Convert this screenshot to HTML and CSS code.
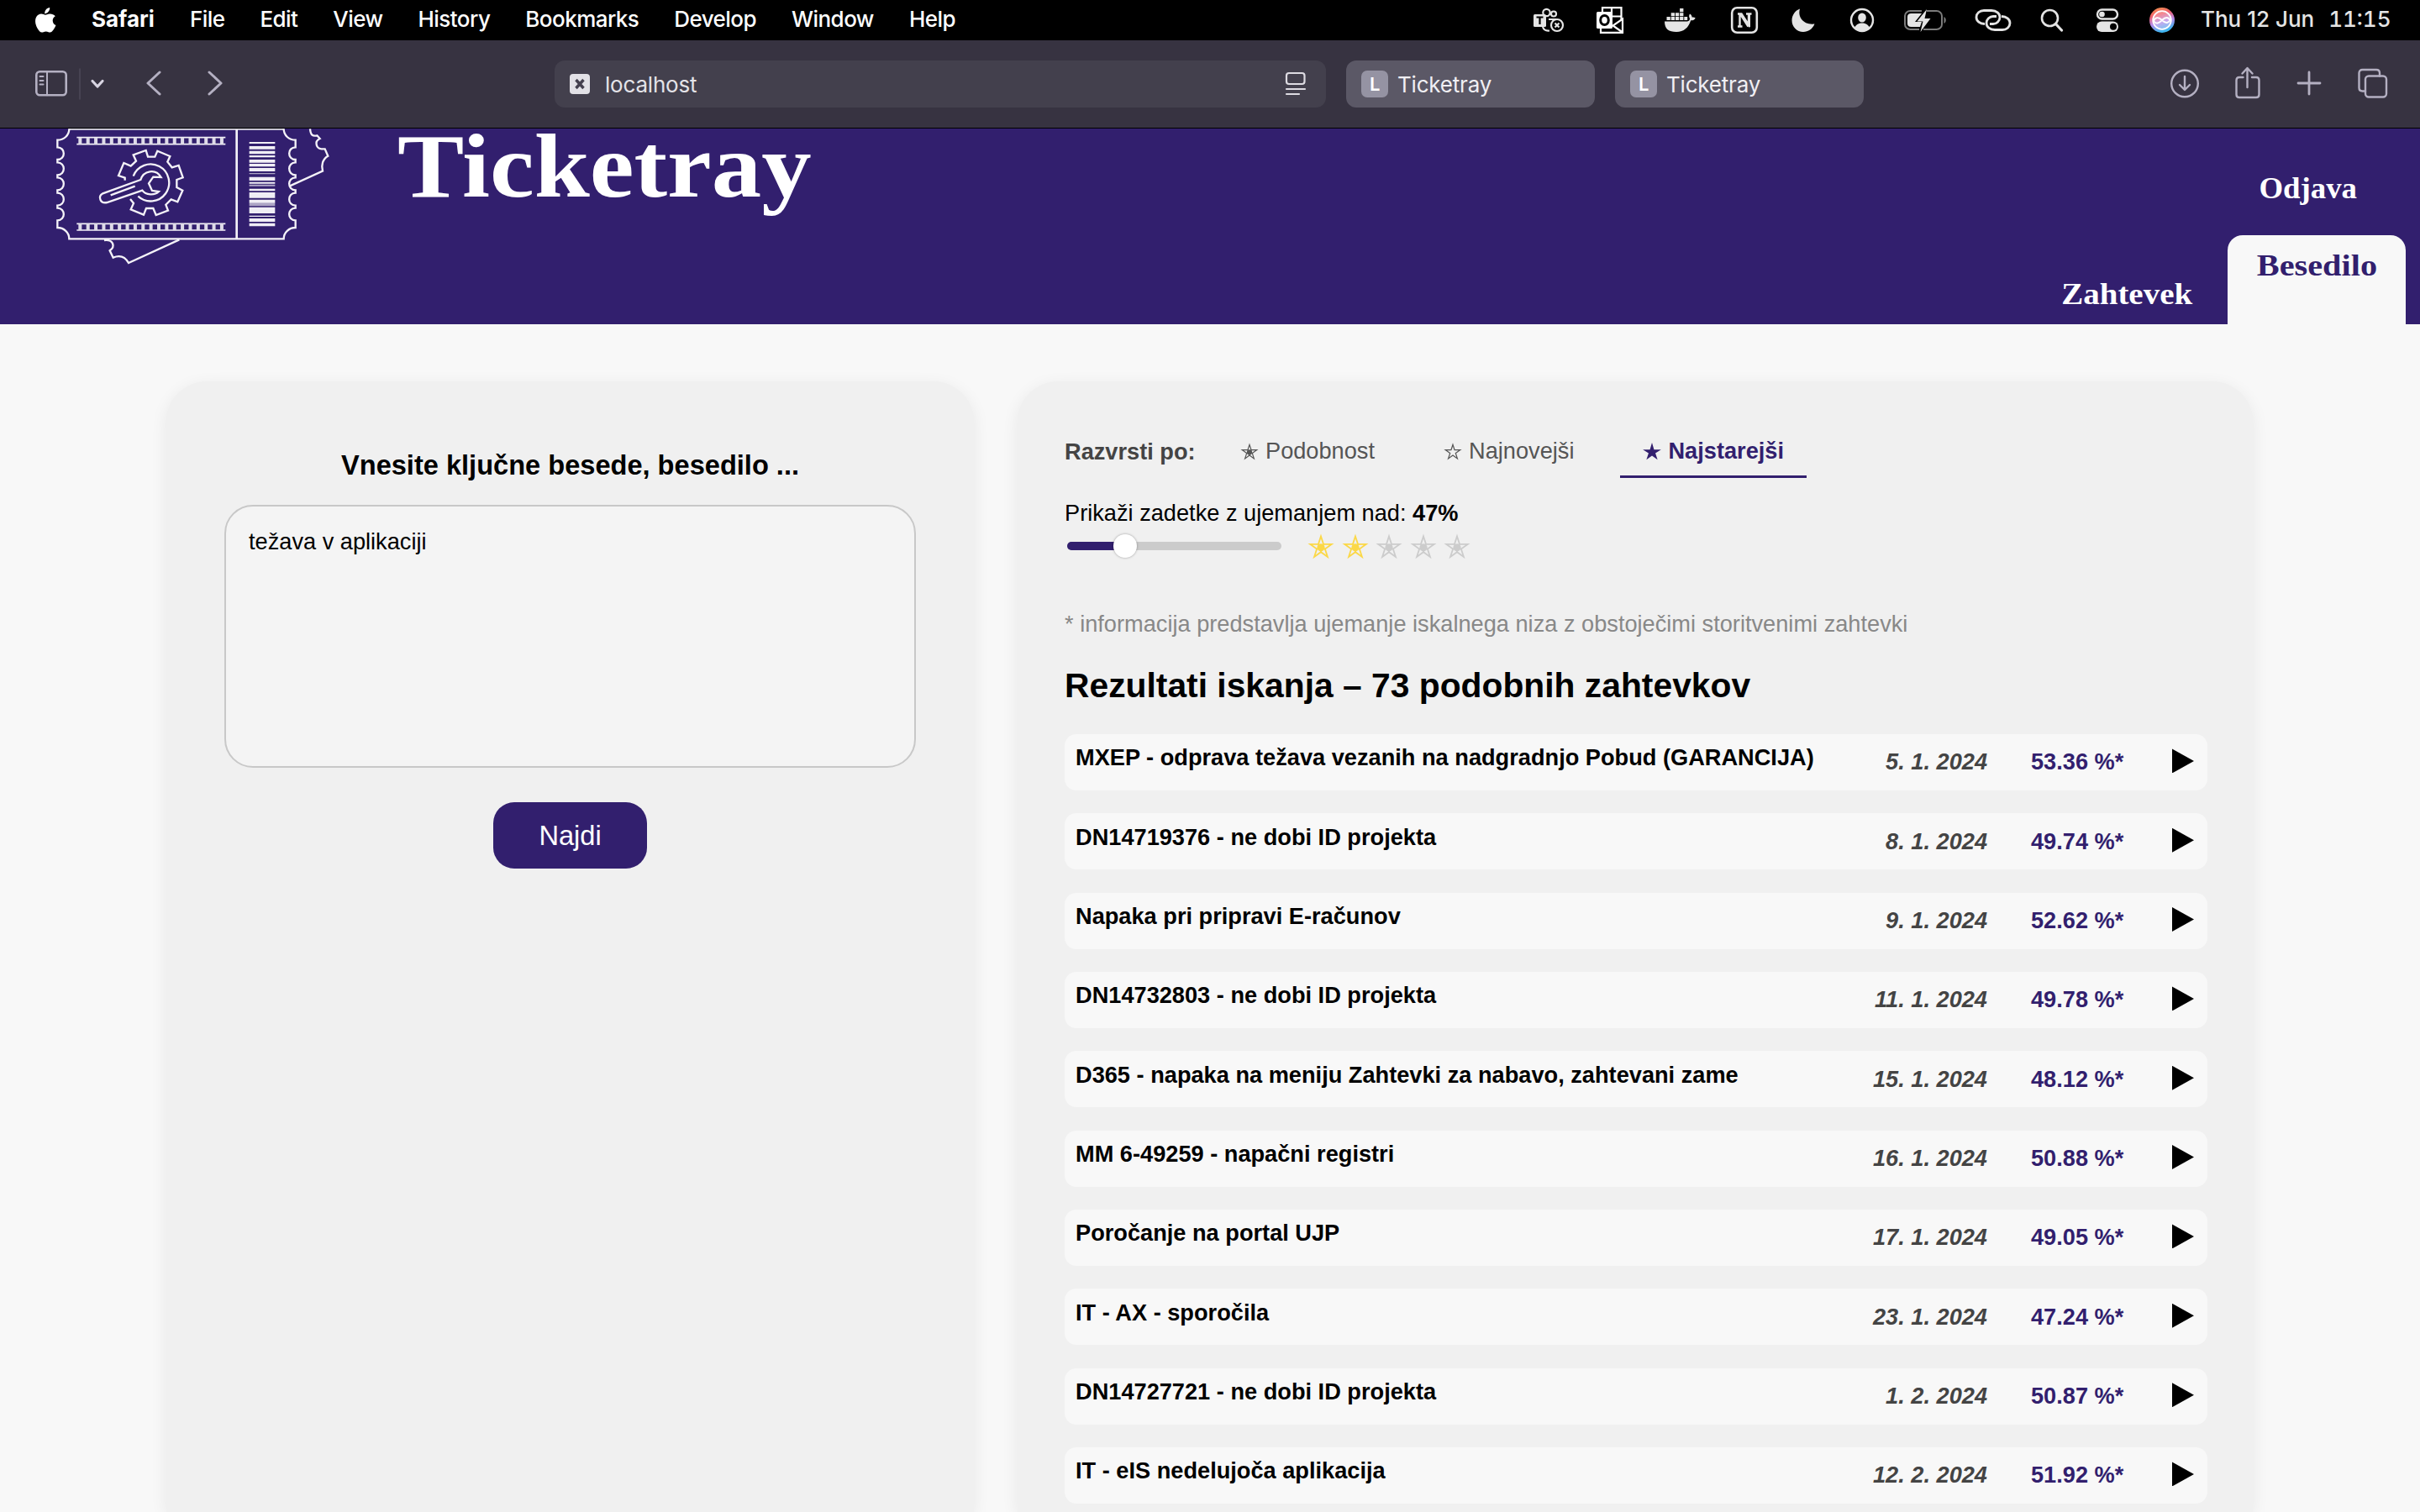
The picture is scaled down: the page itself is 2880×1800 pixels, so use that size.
FILE: index.html
```html
<!DOCTYPE html>
<html lang="sl">
<head>
<meta charset="utf-8">
<title>Ticketray</title>
<link rel="stylesheet" href="styles.css">
</head>
<body>
<svg width="0" height="0" class="defs" aria-hidden="true">
  <defs>
    <symbol id="star-dot" viewBox="0 0 32 31">
      <path d="M16 3.500 19.050 12.800H28.800L20.900 18.600 23.900 27.900 16 22.200 8.100 27.900 11.100 18.600 3.200 12.800H12.950Z" fill="none" stroke="currentColor" stroke-width="1.800"/>
      <circle cx="16" cy="16.800" r="4.600" fill="currentColor"/>
      <path d="M16 16.800 12.950 12.800M16 16.800 19.050 12.800M16 16.800 20.900 18.600M16 16.800V22.200M16 16.800 11.100 18.600" stroke="currentColor" stroke-width="1.800"/>
    </symbol>
  </defs>
</svg>

<div class="menubar">
  <svg class="apple" width="28" height="32" viewBox="0 0 28 32"><path fill="#fff" d="M19.200 1c.2 2-.6 3.800-1.700 5.100-1.200 1.400-2.800 2.200-4.300 2.100-.2-1.900.7-3.800 1.700-5C16 1.900 17.800 1.100 19.200 1zM25.800 11.200c-2 1.200-3.100 3-3.100 5.200 0 2.600 1.500 4.600 3.800 5.600-.6 1.800-1.500 3.500-2.600 5.100-1.300 1.900-2.600 3.400-4.500 3.400-1.900 0-2.500-1.100-4.700-1.100-2.300 0-3 1.100-4.800 1.100-1.900.1-3.300-1.700-4.600-3.600C2.600 23.100.7 16.500 3.300 12.100 4.600 9.900 6.800 8.500 9.200 8.500c1.900 0 3.600 1.200 4.800 1.200 1.100 0 3.200-1.500 5.600-1.300 2.300.1 4.700 1 6.200 2.800z"/></svg>
  <div class="menus">
    <b>Safari</b><span>File</span><span>Edit</span><span>View</span><span>History</span><span>Bookmarks</span><span>Develop</span><span>Window</span><span>Help</span>
  </div>
  <div class="status">
    <svg class="s-teams" width="38" height="32" viewBox="0 0 38 32" fill="none" stroke="#e4e4e4" stroke-width="2.200"><circle cx="16.500" cy="7" r="4.200"/><circle cx="25" cy="8.500" r="3"/><path d="M19 15h9M12 24c1 3 4 5 8 4.500"/><rect x="1" y="9" width="15" height="15" rx="1.500" fill="#e4e4e4" stroke="none"/><path d="M4.500 12.500h8M8.500 12.500V21" stroke="#000"/><circle cx="29" cy="22" r="7" fill="#000"/><path d="m26.500 19.500 5 5m0-5-5 5"/></svg>
    <svg class="s-outlook" width="34" height="34" viewBox="0 0 34 34" fill="none" stroke="#fff" stroke-width="2.200"><path d="M8 7V2.200h22.500V17M19 2v11M19 12.500h11"/><path d="M6 26v5.800h26V15.500L20.500 23.500 32 31.500"/><rect x="1" y="7" width="19" height="20" rx="1.500" fill="#fff" stroke="none"/><ellipse cx="10.500" cy="17" rx="4.800" ry="5.500" stroke="#000" stroke-width="3"/></svg>
    <svg class="s-docker" width="38" height="32" viewBox="0 0 38 32" fill="#e4e4e4"><path d="M1 17.500h27c2-.3 3-1.500 3-3.500-1.300-2-1-4 0-5.500 1.800 1 2.500 2.500 2.700 4 1.500-.3 3 0 4 .9-1 2.300-3 3-5.500 2.900C29.500 25 24 30 15 30 6 30 1 26.500 1 17.500zM3.500 12h4.300v4H3.500zM8.700 12H13v4H8.700zM13.900 12h4.300v4h-4.300zM19.100 12h4.300v4h-4.300zM24.300 12h3.900v4h-3.900zM8.700 7.200H13v4H8.700zM13.900 7.200h4.300v4h-4.300zM19.100 7.200h4.300v4h-4.300zM19.100 2h4.300v4.300h-4.300z"/></svg>
    <svg class="s-notion" width="34" height="34" viewBox="0 0 34 34"><rect x="2.200" y="2.200" width="29.600" height="29.600" rx="6" fill="none" stroke="#e4e4e4" stroke-width="2.600"/><path d="M9 9.500h4.500l8.500 13V10.500M9 24.500h5.500M11.500 10v14M19 9.500h6.500M22.800 25V10M12 9.500l9.500 15" fill="none" stroke="#e4e4e4" stroke-width="2.400"/></svg>
    <svg class="s-moon" width="30" height="30" viewBox="0 0 30 30"><path fill="#e4e4e4" d="M11 1.500c-3 10 4.500 19.500 17.500 18C26 25.500 21 29 15 29 7.500 29 1.500 23 1.500 15.500 1.500 9 5.500 3.500 11 1.500z"/></svg>
    <svg class="s-user" width="30" height="30" viewBox="0 0 30 30"><circle cx="15" cy="15" r="13" fill="none" stroke="#e4e4e4" stroke-width="2.400"/><ellipse cx="15" cy="12" rx="4.800" ry="5.600" fill="#e4e4e4"/><path d="M6 24c2-4 5-5.500 9-5.500s7 1.500 9 5.500c-5 5-13 5-18 0z" fill="#e4e4e4"/></svg>
    <svg class="s-battery" width="52" height="30" viewBox="0 0 52 30"><path d="M22 4H8.500C5 4 2 6.500 2 10v10c0 3.500 3 6 6.500 6H19M28 4h11.500C43 4 46 6.500 46 10v10c0 3.500-3 6-6.500 6H24" fill="none" stroke="#7b7b7b" stroke-width="2"/><path d="M48.500 11v8c3-1.500 3-6.500 0-8z" fill="#7b7b7b"/><path d="M22 7H9.500C6.500 7 5 8.500 5 11v8c0 2.500 1.500 4 4.500 4H20l2-6h-8z" fill="#e4e4e4"/><path d="M28 2 16.500 16.500h7L20.500 29 32.500 13h-7z" fill="#e4e4e4"/></svg>
    <svg class="s-link" width="44" height="28" viewBox="0 0 44 28" fill="none" stroke="#e4e4e4" stroke-width="2.800"><path d="M12 18.500C6 18.500 2 15 2 10.500S6 2.500 11 2.500h9c6 0 10 3.500 10 8s-4 8-8 8h-4"/><path d="M32 9.500c6 0 10 3.500 10 8s-4 8-9 8h-9c-6 0-10-3.500-10-8s4-8 8-8h4"/></svg>
    <svg class="s-search" width="28" height="28" viewBox="0 0 28 28" fill="none" stroke="#e4e4e4" stroke-width="2.600" stroke-linecap="round"><circle cx="11.500" cy="11.500" r="9.500"/><path d="m18.500 18.500 7 7.500" stroke-width="3.200"/></svg>
    <svg class="s-toggle" width="28" height="30" viewBox="0 0 28 30"><rect x="2" y="2.500" width="24" height="11" rx="5.500" fill="none" stroke="#e4e4e4" stroke-width="2.400"/><circle cx="7.500" cy="8" r="3.300" fill="#e4e4e4"/><rect x="1" y="16.500" width="26" height="12.500" rx="6.200" fill="#e4e4e4"/><circle cx="21" cy="22.700" r="4" fill="#000"/></svg>
    <svg class="s-siri" width="30" height="30" viewBox="0 0 30 30"><defs><linearGradient id="siri" x1="0" y1="0" x2=".3" y2="1"><stop offset="0" stop-color="#f5a04a"/><stop offset=".35" stop-color="#f0606a"/><stop offset=".65" stop-color="#b98ae8"/><stop offset="1" stop-color="#3fb5f0"/></linearGradient></defs><circle cx="15" cy="15" r="15" fill="url(#siri)"/><g fill="none" stroke="#fff" stroke-width="1.800"><circle cx="15" cy="15" r="10.800" fill="#fff" fill-opacity=".25"/><path d="M5 16c2-5 6-5 10-1s7 4 9.500 0c-2-4-5.500-4-9.500 0s-7 5-10 1z"/></g></svg>
    <div class="clock"><span>Thu 12 Jun</span><span class="time">11:15</span></div>
  </div>
</div>

<div class="toolbar">
  <svg class="t-left" width="230" height="40" viewBox="0 0 230 40" fill="none" stroke="#b4b0c2" stroke-width="2.600" stroke-linecap="round" stroke-linejoin="round">
    <rect x="3.300" y="5.300" width="35.400" height="28" rx="4"/><path d="M16 5.300v28M7.500 11h4M7.500 16h4M7.500 20.500h4" stroke-width="2"/>
    <path d="M55 2v36" stroke="#4e4a58" stroke-width="1.500"/>
    <path d="m70 16.500 6 6.500 6-6.500" stroke="#d8d5e2" stroke-width="3.200"/>
    <path d="m150 6-14 13 14 13M209 6l14 13-14 13" stroke-width="3"/>
  </svg>
  <div class="urlbar">
    <svg width="24" height="24" viewBox="0 0 24 24"><rect width="24" height="24" rx="4" fill="#e2e1e6"/><path d="m7.500 7 9 10m0-10-9 10" stroke="#44404e" stroke-width="3.400"/></svg>
    <span>localhost</span>
    <svg class="reader" width="26" height="30" viewBox="0 0 26 30" fill="none" stroke="#dddbe2" stroke-width="2.200" stroke-linecap="round"><rect x="2" y="2" width="21.500" height="13" rx="3"/><path d="M2 21h22M2 27h15"/></svg>
  </div>
  <div class="tab"><b>L</b><span>Ticketray</span></div>
  <div class="tab"><b>L</b><span>Ticketray</span></div>
  <svg class="t-right" width="275" height="44" viewBox="0 0 275 44" fill="none" stroke="#b4b0c2" stroke-width="2.400" stroke-linecap="round" stroke-linejoin="round">
    <circle cx="20" cy="21.500" r="15.800"/><path d="M20 13v15.500m-6-5.500 6 6 6-6"/>
    <path d="M89.500 14H85c-2 0-3.500 1.500-3.500 3.500v17c0 2 1.500 3.500 3.500 3.500h20c2 0 3.500-1.500 3.500-3.500v-17c0-2-1.500-3.500-3.500-3.500h-5M94.500 26V3.500m-6 6 6-6.500 6 6.500"/>
    <path d="M155 21h26M168 8v26" stroke-width="2.800"/>
    <rect x="235" y="12.500" width="25" height="25" rx="4"/><path d="M235 30.500h-3.500c-2.500 0-4-1.500-4-4V9c0-2.500 1.500-4 4-4h16.500c2.500 0 4 1.500 4 4v3.500"/>
  </svg>
</div>

<header class="site-header">
  <svg class="logo" width="380" height="187" viewBox="0 39 1140 561" fill="none" stroke="#f4f2f8" stroke-width="7" stroke-linejoin="miter">
    <path d="M127 42H893" stroke="#c6c3d2" stroke-width="6"/>
    <path d="M127 40C127 64 108 80 85 80V106C115 106 115 150 85 150V160C115 160 115 205 85 205V214C115 214 115 259 85 259V269C115 269 115 314 85 314V323C115 323 115 367 85 367V393C108 393 127 410 127 433H893C893 410 912 393 935 393V367C905 367 905 323 935 323V314C905 314 905 269 935 269V259C905 259 905 214 935 214V205C905 205 905 160 935 160V150C905 150 905 106 935 106V80C912 80 893 64 893 40"/>
    <path d="M725 42V433" stroke-width="8"/>
    <g stroke-width="5"><path d="M154 71H685M154 95H685M154 379H685M154 402H685"/></g>
    <path d="M160 83H684M160 390.500H684" stroke="#dedbe8" stroke-width="24" stroke-dasharray="12 16.100"/>
    <path d="M326 224V215L303 207 322 162 347 173 366 155 356 133 401 117 408 140H433L442 119 487 138 478 158 494 178 518 171 533 214 511 222V249L532 260 514 301 491 292 472 311 480 332 437 348 427 324H402L393 347 347 328 357 306 345 291M356 209A66 66 0 1 1 373 281"/>
    <path d="M382 222 247 271C228 282 238 308 262 303L388 260C400 277 432 279 447 264L423 261 411 235 427 212 455 213C435 180 392 190 382 222ZM275 277 362 245"/>
    <path d="M987 40C989 62 996 68 1012 64L1022 75C1000 85 1010 114 1030 112H1040L1051 137C1032 148 1026 170 1032 191L915 244"/>
    <path d="M252 438C286 434 292 462 272 475L284 500C308 490 326 496 339 519L520 436"/>
    <g fill="#f0eef5" stroke="none"><path d="M770 87h92v6h-92zM770 102h92v11h-92zM770 119h92v11h-92zM770 135h92v7h-92zM770 150h92v11h-92zM770 165h92v10h-92zM770 180h92v12h-92zM770 212h92v13h-92zM770 230h92v6h-92zM770 254h92v8h-92zM770 267h92v20h-92zM770 293h92v12h-92zM770 320h92v22h-92zM770 350h92v4h-92zM770 360h92v12h-92zM770 377h92v11h-92z"/><path d="M770 198h92v4h-92zM770 239h92v6h-92zM770 305h92v11h-92z" opacity=".65"/></g>
  </svg>
  <h1>Ticketray</h1>
  <nav class="nav">
    <a class="logout">Odjava</a>
    <div class="nav-row"><a class="nav-link"><span>Zahtevek</span></a><a class="nav-tab"><span>Besedilo</span></a></div>
  </nav>
</header>

<main class="content">
  <section class="card search">
    <h2>Vnesite ključne besede, besedilo ...</h2>
    <div class="textarea">težava v aplikaciji</div>
    <button class="find">Najdi</button>
  </section>

  <section class="card results">
    <div class="sort">
      <strong class="sort-label">Razvrsti po:</strong>
      <a class="sort-tab"><svg width="22" height="21"><use href="#star-dot"/></svg><span>Podobnost</span></a>
      <a class="sort-tab"><svg width="22" height="21" viewBox="0 0 32 31"><path d="M16 3.500 19.050 12.800H28.800L20.900 18.600 23.900 27.900 16 22.200 8.100 27.900 11.100 18.600 3.200 12.800H12.950Z" fill="none" stroke="currentColor" stroke-width="1.900"/></svg><span>Najnovejši</span></a>
      <a class="sort-tab active"><svg width="22" height="21" viewBox="0 0 32 31"><path d="M16 0 19.600 12H32L22 18.500 25.800 30 16 22.900 6.200 30 10 18.500 0 12H12.400Z" fill="currentColor"/></svg><span>Najstarejši</span></a>
    </div>
    <p class="match">Prikaži zadetke z ujemanjem nad: <b>47%</b></p>
    <div class="range">
      <div class="track"><div class="fill"></div><div class="thumb"></div></div>
      <div class="stars"><svg class="on"><use href="#star-dot"/></svg><svg class="on"><use href="#star-dot"/></svg><svg><use href="#star-dot"/></svg><svg><use href="#star-dot"/></svg><svg><use href="#star-dot"/></svg></div>
    </div>
    <p class="info">* informacija predstavlja ujemanje iskalnega niza z obstoječimi storitvenimi zahtevki</p>
    <h2 class="found">Rezultati iskanja – 73 podobnih zahtevkov</h2>
    <div class="rows">
      <div class="row"><b>MXEP - odprava težava vezanih na nadgradnjo Pobud (GARANCIJA)</b><i>5. 1. 2024</i><em>53.36 %*</em><s></s></div>
      <div class="row"><b>DN14719376 - ne dobi ID projekta</b><i>8. 1. 2024</i><em>49.74 %*</em><s></s></div>
      <div class="row"><b>Napaka pri pripravi E-računov</b><i>9. 1. 2024</i><em>52.62 %*</em><s></s></div>
      <div class="row"><b>DN14732803 - ne dobi ID projekta</b><i>11. 1. 2024</i><em>49.78 %*</em><s></s></div>
      <div class="row"><b>D365 - napaka na meniju Zahtevki za nabavo, zahtevani zame</b><i>15. 1. 2024</i><em>48.12 %*</em><s></s></div>
      <div class="row"><b>MM 6-49259 - napačni registri</b><i>16. 1. 2024</i><em>50.88 %*</em><s></s></div>
      <div class="row"><b>Poročanje na portal UJP</b><i>17. 1. 2024</i><em>49.05 %*</em><s></s></div>
      <div class="row"><b>IT - AX - sporočila</b><i>23. 1. 2024</i><em>47.24 %*</em><s></s></div>
      <div class="row"><b>DN14727721 - ne dobi ID projekta</b><i>1. 2. 2024</i><em>50.87 %*</em><s></s></div>
      <div class="row"><b>IT - eIS nedelujoča aplikacija</b><i>12. 2. 2024</i><em>51.92 %*</em><s></s></div>
    </div>
  </section>
</main>
</body>
</html>
```
FILE: styles.css
```css
* { box-sizing: border-box; }

body {
  margin: 0;
  width: 2880px;
  height: 1800px;
  overflow: hidden;
  display: flex;
  flex-direction: column;
  background: #f8f8f8;
  color: #000;
  font-family: "Liberation Sans", sans-serif;
}

svg { display: block; flex: none; }
.defs { position: absolute; }
h1, h2, p { margin: 0; font-weight: bold; }

/* System menu bar */
.menubar {
  flex: none;
  height: 48px;
  background: #000;
  color: #fff;
  display: flex;
  align-items: center;
  padding: 0 37px 0 40px;
  font: 500 26px "Inter", sans-serif;
}
.menus { display: flex; gap: 42px; margin-left: 41px; padding-bottom: 3px; letter-spacing: -.55px; }
.menus b { font-weight: 700; letter-spacing: 0; }
.status { margin-left: auto; display: flex; align-items: center; color: #e4e4e4; }
.s-teams { margin-right: 37px; }
.s-outlook { margin-right: 47px; }
.s-docker { margin-right: 41px; }
.s-notion { margin-right: 38px; }
.s-moon { margin-right: 40px; }
.s-user { margin-right: 34px; }
.s-battery { margin-right: 33px; }
.s-link { margin-right: 34px; }
.s-search { margin-right: 38px; }
.s-toggle { margin-right: 36px; }
.s-siri { margin-right: 31px; }
.clock { display: flex; gap: 17px; padding-bottom: 3px; width: 224px; white-space: nowrap; }
.time { font-feature-settings: "tnum"; }

/* Browser toolbar */
.toolbar {
  flex: none;
  height: 105px;
  background: #373341;
  border-bottom: 1px solid #000;
  display: flex;
  align-items: center;
  padding: 0 25px 0 40px;
  color: #e4e3e8;
  font: 400 26px "Inter", sans-serif;
  letter-spacing: -.2px;
}
.t-left { margin-right: 390px; }
.urlbar {
  width: 918px;
  height: 56px;
  border-radius: 12px;
  background: #43404d;
  display: flex;
  align-items: center;
  padding: 0 23px 0 18px;
  gap: 18px;
}
.urlbar span, .tab span { padding-top: 1px; }
.reader { margin-left: auto; }
.tab {
  width: 296px;
  height: 56px;
  border-radius: 12px;
  background: #5b5866;
  display: flex;
  align-items: center;
  padding-left: 18px;
  gap: 11px;
  margin-left: 24px;
  color: #f0eff3;
}
.tab b {
  width: 32px;
  height: 32px;
  border-radius: 7px;
  background: #9593a3;
  color: #fff;
  font-size: 22px;
  font-weight: 600;
  line-height: 33px;
  text-align: center;
}
.t-right { margin-left: auto; }

/* Page header */
.site-header {
  flex: none;
  height: 233px;
  background: #321f6e;
  color: #fff;
  display: flex;
  padding-left: 40px;
  font-family: "Liberation Serif", serif;
  font-weight: bold;
}
.site-header h1 {
  margin-left: 53px;
  padding-top: 1px;
  font-size: 107px;
  line-height: 88px;
  transform: scaleX(1.11);
  transform-origin: left;
}
.nav {
  margin-left: auto;
  display: flex;
  flex-direction: column;
  align-items: flex-end;
  justify-content: space-between;
  padding-right: 17px;
  font-size: 36.8px;
  line-height: 40px;
}
.logout { padding: 51px 58px 0 0; }
.nav-row { display: flex; align-items: flex-end; }
.nav-link { padding: 0 42px 16px 0; }
.nav-link span { display: inline-block; transform: scaleX(1.06); transform-origin: right; }
.nav-tab {
  width: 212px;
  height: 106px;
  padding-top: 16px;
  border-radius: 18px 18px 0 0;
  background: #f8f8f8;
  color: #321f6e;
  text-align: center;
}
.nav-tab span { display: inline-block; transform: scaleX(1.095); }

/* Two column content */
.content {
  flex: 1;
  min-height: 0;
  display: grid;
  grid-template-columns: 961px 1470px;
  gap: 52px;
  padding: 68px 0 0 198px;
}
.card {
  background: #f0f0f0;
  border-radius: 48px 48px 0 0;
  box-shadow: 0 5px 20px rgba(0, 0, 0, .07);
}

.search {
  display: flex;
  flex-direction: column;
  align-items: center;
  padding-top: 80px;
}
.search h2 { font-size: 32.6px; line-height: 40px; }
.textarea {
  width: 823px;
  height: 313px;
  margin-top: 27px;
  padding: 25px 27px;
  border: 2px solid #c8c8c8;
  border-radius: 34px;
  background: #f4f4f4;
  font-size: 27.2px;
  line-height: 34px;
}
.find {
  width: 183px;
  height: 79px;
  margin-top: 41px;
  border: 0;
  border-radius: 25px;
  background: #321f6e;
  color: #fff;
  font: 32.6px "Liberation Sans", sans-serif;
}

.results { padding: 63px 54px 0 56px; }
.sort { display: flex; line-height: 40px; font-size: 27.2px; color: #555; }
.sort-label { width: 182px; color: #444; padding-top: 1px; }
.sort-tab {
  display: flex;
  gap: 8px;
  padding: 0 27px 9px;
  margin-right: 28px;
  border-bottom: 3px solid transparent;
}
.sort-tab svg { margin-top: 10px; }
.sort-tab.active { color: #321f6e; font-weight: bold; border-color: #321f6e; }
.match { margin-top: 26px; font-size: 27.2px; line-height: 32px; font-weight: normal; }
.range { display: flex; align-items: center; height: 30px; margin-top: 8px; padding-left: 3px; }
.track {
  position: relative;
  width: 255px;
  height: 10px;
  border-radius: 5px;
  background: #cbcbcb;
}
.fill { width: 68px; height: 10px; border-radius: 5px 0 0 5px; background: #321f6e; }
.thumb {
  position: absolute;
  left: 55px;
  top: -9px;
  width: 28px;
  height: 28px;
  border-radius: 50%;
  background: #fff;
  box-shadow: 0 0 3px rgba(0, 0, 0, .35);
}
.stars { display: flex; gap: 8.5px; margin-left: 31px; color: #ccc; }
.stars svg { width: 32px; height: 31px; }
.stars .on { color: #fbd848; }
.info { margin-top: 62px; font-size: 27.2px; line-height: 32px; font-weight: normal; color: #888; }
.found { margin-top: 33px; font-size: 40.8px; line-height: 48px; }

.rows { display: flex; flex-direction: column; gap: 27.35px; margin-top: 34px; }
.row {
  flex: none;
  height: 67px;
  border-radius: 14px;
  background: #f8f8f8;
  display: flex;
  align-items: flex-start;
  padding: 12.4px 0 0 13px;
  font-size: 27.2px;
  line-height: 32px;
  font-weight: bold;
  white-space: nowrap;
}
.row i { margin: 5px 52px 0 auto; color: #444; }
.row em { width: 168px; padding-top: 5px; font-style: normal; color: #321f6e; }
.row s {
  width: 42px;
  height: 29px;
  margin-top: 5px;
}
.row s::before {
  content: "";
  display: block;
  width: 26px;
  height: 29px;
  background: #000;
  clip-path: polygon(0 0, 100% 50%, 0 100%);
}
```
